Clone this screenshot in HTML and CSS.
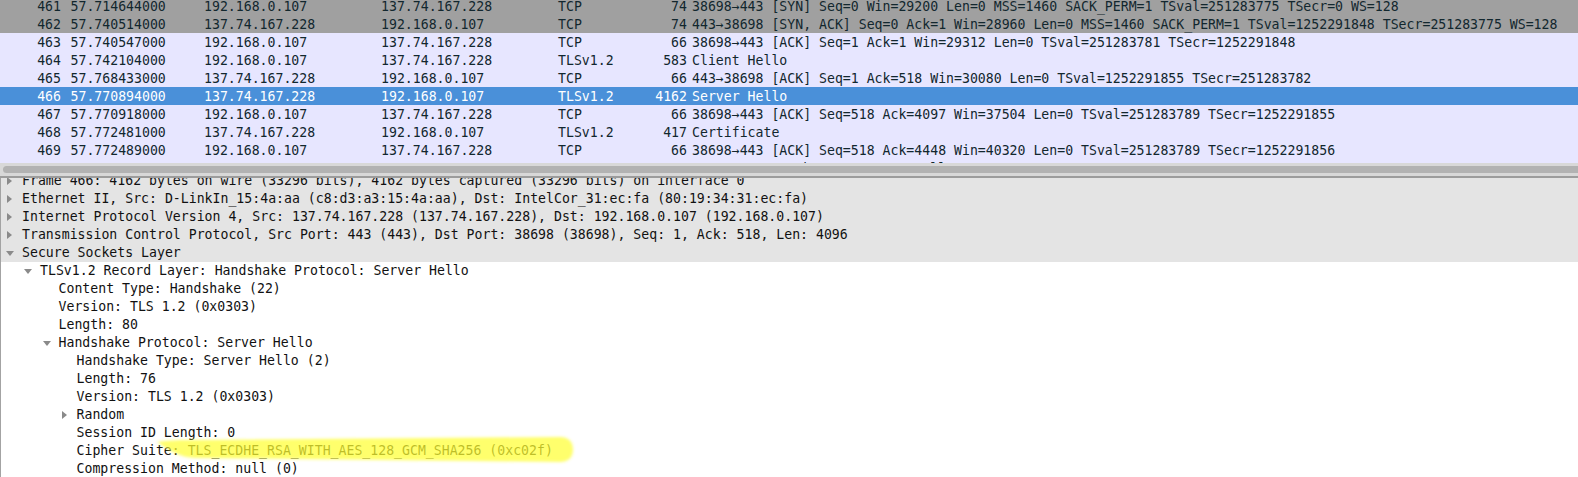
FILE: index.html
```html
<!DOCTYPE html>
<html>
<head>
<meta charset="utf-8">
<link rel="stylesheet" href="styles.css">
</head>
<body>
<div class="app">
  <div class="list">
    <div class="rows">
      <div class="row syn"><span class="no">461</span><span class="time">57.714644000</span><span>192.168.0.107</span><span>137.74.167.228</span><span>TCP</span><span class="len">74</span><span class="info">38698→443 [SYN] Seq=0 Win=29200 Len=0 MSS=1460 SACK_PERM=1 TSval=251283775 TSecr=0 WS=128</span></div>
      <div class="row syn"><span class="no">462</span><span class="time">57.740514000</span><span>137.74.167.228</span><span>192.168.0.107</span><span>TCP</span><span class="len">74</span><span class="info">443→38698 [SYN, ACK] Seq=0 Ack=1 Win=28960 Len=0 MSS=1460 SACK_PERM=1 TSval=1252291848 TSecr=251283775 WS=128</span></div>
      <div class="row"><span class="no">463</span><span class="time">57.740547000</span><span>192.168.0.107</span><span>137.74.167.228</span><span>TCP</span><span class="len">66</span><span class="info">38698→443 [ACK] Seq=1 Ack=1 Win=29312 Len=0 TSval=251283781 TSecr=1252291848</span></div>
      <div class="row"><span class="no">464</span><span class="time">57.742104000</span><span>192.168.0.107</span><span>137.74.167.228</span><span>TLSv1.2</span><span class="len">583</span><span class="info">Client Hello</span></div>
      <div class="row"><span class="no">465</span><span class="time">57.768433000</span><span>137.74.167.228</span><span>192.168.0.107</span><span>TCP</span><span class="len">66</span><span class="info">443→38698 [ACK] Seq=1 Ack=518 Win=30080 Len=0 TSval=1252291855 TSecr=251283782</span></div>
      <div class="row sel"><span class="no">466</span><span class="time">57.770894000</span><span>137.74.167.228</span><span>192.168.0.107</span><span>TLSv1.2</span><span class="len">4162</span><span class="info">Server Hello</span></div>
      <div class="row"><span class="no">467</span><span class="time">57.770918000</span><span>192.168.0.107</span><span>137.74.167.228</span><span>TCP</span><span class="len">66</span><span class="info">38698→443 [ACK] Seq=518 Ack=4097 Win=37504 Len=0 TSval=251283789 TSecr=1252291855</span></div>
      <div class="row"><span class="no">468</span><span class="time">57.772481000</span><span>137.74.167.228</span><span>192.168.0.107</span><span>TLSv1.2</span><span class="len">417</span><span class="info">Certificate</span></div>
      <div class="row"><span class="no">469</span><span class="time">57.772489000</span><span>192.168.0.107</span><span>137.74.167.228</span><span>TCP</span><span class="len">66</span><span class="info">38698→443 [ACK] Seq=518 Ack=4448 Win=40320 Len=0 TSval=251283789 TSecr=1252291856</span></div>
      <div class="row"><span class="no">470</span><span class="time">57.772495000</span><span>137.74.167.228</span><span>192.168.0.107</span><span>TLSv1.2</span><span class="len">400</span><span class="info">Server Key Exchange, Server Hello Done</span></div>
    </div>
  </div>
  <div class="hscroll"><div class="thumb"></div></div>
  <div class="split"></div>
  <div class="detail">
    <div class="tree">
      <div class="node shade l0"><span class="tw closed"></span>Frame 466: 4162 bytes on wire (33296 bits), 4162 bytes captured (33296 bits) on interface 0</div>
      <div class="node shade l0"><span class="tw closed"></span>Ethernet II, Src: D-LinkIn_15:4a:aa (c8:d3:a3:15:4a:aa), Dst: IntelCor_31:ec:fa (80:19:34:31:ec:fa)</div>
      <div class="node shade l0"><span class="tw closed"></span>Internet Protocol Version 4, Src: 137.74.167.228 (137.74.167.228), Dst: 192.168.0.107 (192.168.0.107)</div>
      <div class="node shade l0"><span class="tw closed"></span>Transmission Control Protocol, Src Port: 443 (443), Dst Port: 38698 (38698), Seq: 1, Ack: 518, Len: 4096</div>
      <div class="node shade l0"><span class="tw open"></span>Secure Sockets Layer</div>
      <div class="node l1"><span class="tw open"></span>TLSv1.2 Record Layer: Handshake Protocol: Server Hello</div>
      <div class="node l2">Content Type: Handshake (22)</div>
      <div class="node l2">Version: TLS 1.2 (0x0303)</div>
      <div class="node l2">Length: 80</div>
      <div class="node l2"><span class="tw open"></span>Handshake Protocol: Server Hello</div>
      <div class="node l3">Handshake Type: Server Hello (2)</div>
      <div class="node l3">Length: 76</div>
      <div class="node l3">Version: TLS 1.2 (0x0303)</div>
      <div class="node l3"><span class="tw closed"></span>Random</div>
      <div class="node l3">Session ID Length: 0</div>
      <div class="node l3">Cipher Suite: TLS_ECDHE_RSA_WITH_AES_128_GCM_SHA256 (0xc02f)</div>
      <div class="node l3">Compression Method: null (0)</div>
    </div>
    <svg class="marker" width="440" height="50" viewBox="0 0 440 50">
      <defs><filter id="soft" x="-10%" y="-50%" width="120%" height="200%"><feGaussianBlur stdDeviation="1.8"/></filter></defs>
      <path d="M 6 14 C 15 12.5 25 12 39 12 L 409 9 C 418 9 422 14 422 21.5 C 422 29 418 34 409 34 L 44 30 C 30 29.5 20 24 6 14 Z" fill="#ffff35" fill-opacity="0.72" filter="url(#soft)"/>
    </svg>
  </div>
</div>
</body>
</html>
```

FILE: styles.css
```css
html, body {
  margin: 0;
  padding: 0;
}
body {
  width: 1578px;
  height: 477px;
  overflow: hidden;
  font-family: "DejaVu Sans Mono", "Liberation Mono", monospace;
  font-size: 13.2px;
  background: #ffffff;
}
.app {
  display: flex;
  flex-direction: column;
  height: 477px;
}
.list {
  flex: none;
  height: 163px;
  overflow: hidden;
  background: #e7e6ff;
}
.rows {
  margin-top: -3px;
}
.row {
  display: grid;
  grid-template-columns: 61px 143px 177px 177px 88px 41px 1fr;
  height: 18px;
  box-sizing: border-box;
  padding-top: 1px;
  line-height: 18px;
  color: #12272e;
  background: #e7e6ff;
  white-space: nowrap;
}
.row.syn {
  background: #a0a0a0;
}
.row.sel {
  background: #4a90d9;
  color: #ffffff;
}
.no, .len {
  text-align: right;
}
.time {
  padding-left: 9.5px;
}
.info {
  padding-left: 5px;
  overflow: hidden;
}
.hscroll {
  flex: none;
  height: 13px;
  box-sizing: border-box;
  padding: 3px 0 3px 3px;
  background: #d8d8d8;
  overflow: hidden;
}
.thumb {
  height: 7px;
  margin-right: -6px;
  border-radius: 4px;
  background: #b2b2b2;
}
.split {
  flex: none;
  height: 2px;
  background: #9c9c9c;
}
.detail {
  flex: 1;
  position: relative;
  overflow: hidden;
  background: #ffffff;
  border-left: 1px solid #a3a3a3;
}
.tree {
  margin-top: -6px;
}
.node {
  height: 18px;
  line-height: 18px;
  color: #111111;
  white-space: nowrap;
}
.node.shade {
  background: #e4e4e4;
}
.l0 { padding-left: 21px; }
.l1 { padding-left: 39px; }
.l2 { padding-left: 57.5px; }
.l3 { padding-left: 75.5px; }
.tw {
  display: inline-block;
  position: relative;
  width: 15px;
  height: 18px;
  margin-left: -15px;
  vertical-align: top;
}
.tw::after {
  content: "";
  position: absolute;
  width: 0;
  height: 0;
}
.tw.closed::after {
  left: 0;
  top: 5px;
  border-left: 5px solid #8a8a8a;
  border-top: 4px solid transparent;
  border-bottom: 4px solid transparent;
}
.tw.open::after {
  left: -1px;
  top: 7px;
  border-top: 5px solid #8a8a8a;
  border-left: 4px solid transparent;
  border-right: 4px solid transparent;
}
.marker {
  position: absolute;
  left: 150px;
  top: 250px;
  pointer-events: none;
}
```
